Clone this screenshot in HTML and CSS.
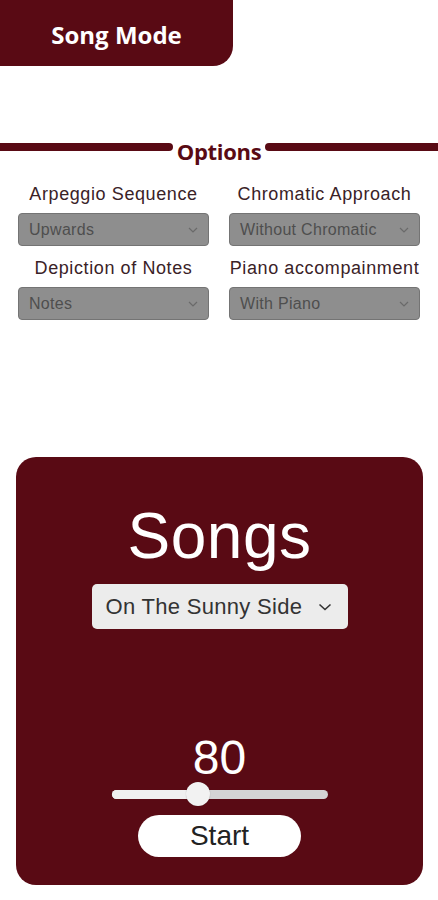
FILE: index.html
```html
<!DOCTYPE html>
<html>

<head>
    <title>Song Mode</title>
    <link rel="stylesheet" href="styles.css">
</head>

<body>
    <div class="mode-tab">Song Mode</div>

    <div class="options">
        <div class="options-title">
            <span class="bar bar-left"></span>
            <h2>Options</h2>
            <span class="bar bar-right"></span>
        </div>

        <div class="options-grid">
            <div class="option">
                <label>Arpeggio Sequence</label>
                <div class="select-grey">
                    <span>Upwards</span>
                    <svg class="chevron" width="10" height="6" viewBox="0 0 10 6"><path d="M1 1l4 4 4-4" /></svg>
                </div>
            </div>
            <div class="option">
                <label>Chromatic Approach</label>
                <div class="select-grey">
                    <span>Without Chromatic</span>
                    <svg class="chevron" width="10" height="6" viewBox="0 0 10 6"><path d="M1 1l4 4 4-4" /></svg>
                </div>
            </div>
            <div class="option">
                <label>Depiction of Notes</label>
                <div class="select-grey">
                    <span>Notes</span>
                    <svg class="chevron" width="10" height="6" viewBox="0 0 10 6"><path d="M1 1l4 4 4-4" /></svg>
                </div>
            </div>
            <div class="option">
                <label>Piano accompainment</label>
                <div class="select-grey">
                    <span>With Piano</span>
                    <svg class="chevron" width="10" height="6" viewBox="0 0 10 6"><path d="M1 1l4 4 4-4" /></svg>
                </div>
            </div>
        </div>
    </div>

    <div class="songs-card">
        <h1>Songs</h1>
        <div class="song-select">
            <span>On The Sunny Side</span>
            <svg class="chevron-dark" width="14" height="8" viewBox="0 0 14 8"><path d="M1.5 1.5l5.5 5 5.5-5" /></svg>
        </div>

        <div class="tempo">80</div>
        <div class="slider">
            <div class="track">
                <div class="track-fill" style="width: 40%"></div>
                <div class="thumb"></div>
            </div>
        </div>

        <button class="start">Start</button>
    </div>
</body>

</html>
```

FILE: styles.css
```css
body {
    margin: 0;
    font-family: "Liberation Sans", Arial, sans-serif;
    background-color: #fff;
}

.mode-tab {
    width: 233px;
    height: 66px;
    background-color: #590a14;
    border-bottom-right-radius: 20px;
    color: #fff;
    font-family: "Open Sans", sans-serif;
    font-weight: bold;
    font-size: 24px;
    display: flex;
    align-items: center;
    justify-content: center;
    box-sizing: border-box;
    padding-top: 2px;
}

.options {
    margin-top: 70px;
}

.options-title {
    display: flex;
    align-items: center;
    gap: 4px;
}

.options-title h2 {
    margin: 0;
    font-family: "Open Sans", sans-serif;
    font-size: 22px;
    line-height: 30px;
    letter-spacing: -0.3px;
    color: #590a14;
}

.bar {
    flex: 1;
    height: 8px;
    background-color: #590a14;
    margin-bottom: 8px;
}

.bar-left {
    border-radius: 0 4px 4px 0;
}

.bar-right {
    border-radius: 4px 0 0 4px;
}

.options-grid {
    display: grid;
    grid-template-columns: 191px 191px;
    column-gap: 20px;
    row-gap: 12px;
    padding: 0 18px;
    margin-top: 18px;
}

.option {
    display: flex;
    flex-direction: column;
    gap: 9px;
}

.option label {
    text-align: center;
    font-size: 18px;
    line-height: 20px;
    letter-spacing: 0.6px;
    white-space: nowrap;
    color: #3a2227;
}

.select-grey {
    height: 33px;
    box-sizing: border-box;
    background-color: #8e8e8e;
    border: 1px solid #747474;
    border-radius: 4px;
    display: flex;
    align-items: center;
    justify-content: space-between;
    padding: 0 10px 0 10px;
    font-size: 16px;
    letter-spacing: 0.3px;
    color: #4e4e4e;
}

.chevron path {
    fill: none;
    stroke: #6a6a6a;
    stroke-width: 1.2;
}

.songs-card {
    margin: 137px 15px 15px 16px;
    background-color: #590a14;
    border-radius: 20px;
    padding: 47px 0 28px;
    display: flex;
    flex-direction: column;
    align-items: center;
}

.songs-card h1 {
    margin: 0;
    font-weight: normal;
    font-size: 64px;
    line-height: 64px;
    letter-spacing: 0.5px;
    color: #fff;
}

.song-select {
    margin-top: 16px;
    width: 256px;
    height: 45px;
    box-sizing: border-box;
    background-color: #ececec;
    border-radius: 5px;
    display: flex;
    align-items: center;
    justify-content: space-between;
    padding: 0 16px 0 14px;
    font-size: 22px;
    letter-spacing: 0.3px;
    color: #333;
}

.chevron-dark path {
    fill: none;
    stroke: #333;
    stroke-width: 1.6;
}

.tempo {
    margin-top: 105px;
    font-size: 48px;
    line-height: 48px;
    color: #fff;
}

.slider {
    width: 216px;
    height: 24px;
    display: flex;
    align-items: center;
}

.track {
    position: relative;
    width: 100%;
    height: 9px;
    border-radius: 5px;
    background-color: #d4d4d4;
}

.track-fill {
    height: 100%;
    border-radius: 5px 0 0 5px;
    background-color: #f0f0f0;
}

.thumb {
    position: absolute;
    left: 40%;
    top: 50%;
    width: 24px;
    height: 24px;
    margin: -12px 0 0 -12px;
    border-radius: 50%;
    background-color: #f2f2f2;
    box-shadow: 0 0 1px rgba(0, 0, 0, 0.3);
}

.start {
    margin-top: 9px;
    width: 163px;
    height: 42px;
    border: none;
    border-radius: 21px;
    background-color: #fff;
    font-family: "Liberation Sans", Arial, sans-serif;
    font-size: 28px;
    color: #222;
    padding: 0;
}
```
